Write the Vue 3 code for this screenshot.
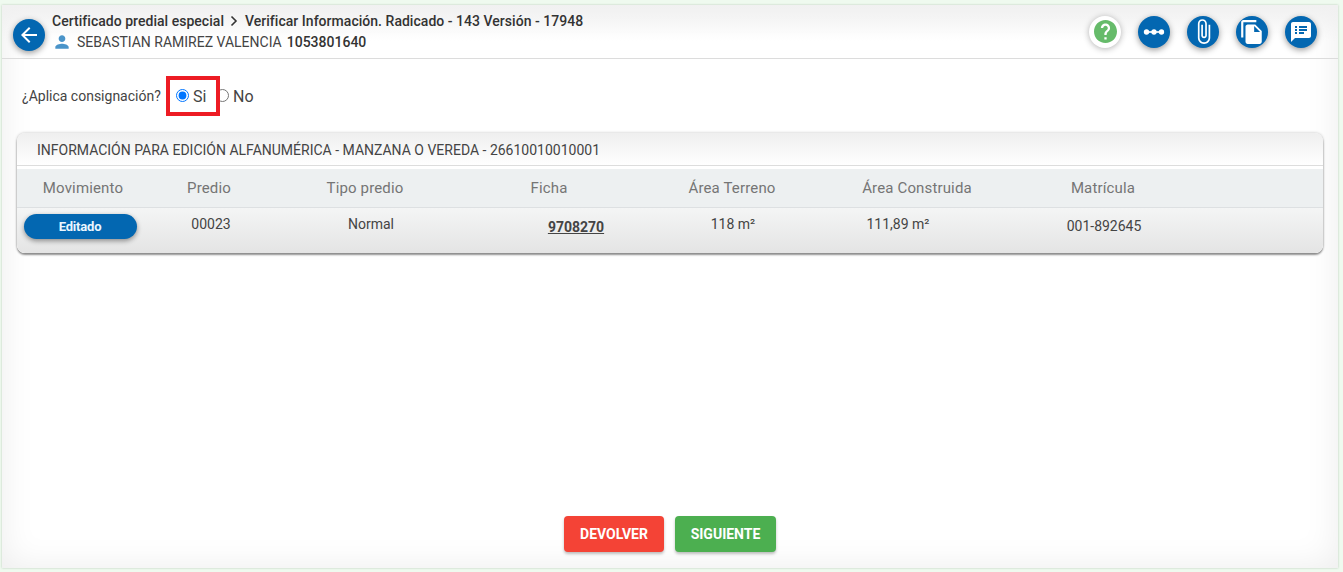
<script setup>
const headers = ['Movimiento', 'Predio', 'Tipo predio', 'Ficha', 'Área Terreno', 'Área Construida', 'Matrícula', '']
</script>

<template>
  <div class="page">
    <main class="panel">
      <header class="top">
        <button class="fab back" aria-label="Volver">
          <svg viewBox="0 0 24 24" width="24" height="24"><path d="M20 11H7.83l5.59-5.59L12 4l-8 8 8 8 1.41-1.41L7.83 13H20v-2z" /></svg>
        </button>
        <div class="titles">
          <div class="crumb">
            <span>Certificado predial especial</span>
            <svg class="chev" viewBox="0 0 10 12" width="10" height="12"><path d="M2.500 1.500 7 6l-4.500 4.500" /></svg>
            <span>Verificar Información. Radicado - 143 Versión - 17948</span>
          </div>
          <div class="person">
            <svg viewBox="0 0 24 24" width="20" height="20"><path d="M12 12c2.210 0 4-1.790 4-4s-1.790-4-4-4-4 1.790-4 4 1.790 4 4 4zm0 2c-2.670 0-8 1.340-8 4v2h16v-2c0-2.660-5.330-4-8-4z" /></svg>
            <span class="name">SEBASTIAN RAMIREZ VALENCIA</span>
            <strong>1053801640</strong>
          </div>
        </div>
        <div class="actions">
          <button class="fab help" aria-label="Ayuda">
            <svg viewBox="2 2 20 20" width="23" height="23"><path d="M12 2C6.480 2 2 6.480 2 12s4.480 10 10 10 10-4.480 10-10S17.520 2 12 2zm1 17h-2v-2h2v2zm2.070-7.750l-.9.920C13.450 12.900 13 13.500 13 15h-2v-.5c0-1.100.45-2.100 1.170-2.830l1.240-1.260c.37-.36.59-.86.59-1.410 0-1.100-.9-2-2-2s-2 .9-2 2H8c0-2.210 1.790-4 4-4s4 1.790 4 4c0 .88-.36 1.680-.93 2.250z" /></svg>
          </button>
          <button class="fab" aria-label="Flujo">
            <svg viewBox="0 0 26 12" width="22" height="10"><path d="M3 5h20v2H3z" /><circle cx="4" cy="6" r="3.200" /><circle cx="13" cy="6" r="3.200" /><circle cx="22" cy="6" r="3.200" /></svg>
          </button>
          <button class="fab" aria-label="Adjuntos">
            <svg viewBox="0 0 24 24" width="27" height="27"><path d="M16.500 6v11.500c0 2.210-1.790 4-4 4s-4-1.790-4-4V5c0-1.380 1.120-2.500 2.500-2.500s2.500 1.120 2.500 2.500v10.500c0 .55-.45 1-1 1s-1-.45-1-1V6H10v9.500c0 1.380 1.120 2.500 2.500 2.500s2.500-1.120 2.500-2.500V5c0-2.210-1.790-4-4-4S7 2.790 7 5v12.500c0 3.040 2.460 5.500 5.500 5.500s5.500-2.460 5.500-5.500V6h-1.500z" /></svg>
          </button>
          <button class="fab" aria-label="Documentos">
            <svg viewBox="0 0 24 24" width="26" height="26"><path d="M16 1H4c-1.100 0-2 .9-2 2v14h2V3h12V1zm-1 4l6 6v10c0 1.100-.9 2-2 2H7.990C6.890 23 6 22.100 6 21l.01-14c0-1.100.89-2 1.990-2h7zm-1 7h5.500L14 6.500V12z" /></svg>
          </button>
          <button class="fab" aria-label="Notas">
            <svg viewBox="0 0 24 24" width="24" height="24"><path d="M20 2H4c-1.100 0-1.990.9-1.990 2L2 22l4-4h14c1.100 0 2-.9 2-2V4c0-1.100-.9-2-2-2zM8 14H6v-2h2v2zm0-3H6V9h2v2zm0-3H6V6h2v2zm7 6h-5v-2h5v2zm3-3h-8V9h8v2zm0-3h-8V6h8v2z" /></svg>
          </button>
        </div>
      </header>

      <section class="question">
        <span class="q-label">¿Aplica consignación?</span>
        <label class="opt si"><input type="radio" name="c" checked />Si</label>
        <label class="opt no"><input type="radio" name="c" />No</label>
        <span class="mark"></span>
      </section>

      <section class="card">
        <h2>INFORMACIÓN PARA EDICIÓN ALFANUMÉRICA - MANZANA O VEREDA - 26610010010001</h2>
        <div class="table">
          <div class="row head">
            <div v-for="h in headers" :key="h" class="cell">{{ h }}</div>
          </div>
          <div class="row body">
            <div class="cell pill-cell"><span class="pill">Editado</span></div>
            <div class="cell up shift-predio">00023</div>
            <div class="cell up shift-normal">Normal</div>
            <div class="cell shift-ficha"><a class="link">9708270</a></div>
            <div class="cell up shift-terreno">118 m²</div>
            <div class="cell up shift-area">111,89 m²</div>
            <div class="cell shift-mat">001-892645</div>
            <div class="cell"></div>
          </div>
        </div>
      </section>

      <footer class="bottom">
        <button class="btn red">DEVOLVER</button>
        <button class="btn green">SIGUIENTE</button>
      </footer>
    </main>
  </div>
</template>

<style>
html, body { margin: 0; overflow: hidden; }
</style>

<style scoped>
* { box-sizing: border-box; }
.page {
  width: 1343px; height: 572px; overflow: hidden;
  padding: 5px 5px 4px 2px;
  background: #effaef;
  font-family: Roboto, "Liberation Sans", sans-serif;
  color: #333;
}
.panel {
  position: relative;
  height: 100%;
  display: flex; flex-direction: column;
  background: #fff;
  box-shadow: inset 0 0 34px rgba(0,0,0,.08), 0 0 2px rgba(60,90,60,.3);
}
.top {
  height: 54px; flex: none;
  display: flex; align-items: center;
  padding: 6px 21px 0 11px;
  border-bottom: 1px solid #dcdcdc;
  background: linear-gradient(#f1f1f1, rgba(255,255,255,0) 36px);
}
.fab {
  width: 32px; height: 32px; flex: none; padding: 0;
  border: 0; border-radius: 50%;
  display: flex; align-items: center; justify-content: center;
  background: #0367b1;
  box-shadow: 0 2px 6px rgba(0,0,0,.4);
}
.fab svg { fill: #fff; }
.help { background: #fff; box-shadow: 0 1px 6px rgba(0,0,0,.3); }
.help svg { fill: #66bb6a; }
.titles { margin-left: 7px; margin-top: -7px; }
.crumb {
  display: flex; align-items: center; gap: 5.500px;
  font-size: 14px; font-weight: 500; line-height: 20px; color: #333;
  letter-spacing: .03px;
}
.chev { fill: none; stroke: #333; stroke-width: 1.600; }
.person {
  display: flex; align-items: center;
  margin-top: 1px; line-height: 20px; font-size: 14px;
}
.person svg { fill: #4a94c9; margin-right: 5px; }
.name { color: #444; font-size: 14px; }
.person strong { margin-left: 5px; font-weight: 500; color: #333; }
.actions { margin-left: auto; display: flex; gap: 17px; margin-top: -6px; }

.question {
  position: relative;
  height: 74px; flex: none;
  display: flex; align-items: center;
  padding-left: 20px;
}
.q-label { font-size: 14px; color: #444; width: 154px; }
.opt {
  display: flex; align-items: center;
  font-size: 16px; color: #444;
}
.opt input { margin: -2px 4px 0 0; width: 13px; height: 13px; accent-color: #0075ff; }
.si { width: 39px; }
.no input { margin-right: 4px; margin-left: 1px; }
.mark {
  position: absolute; left: 164px; top: 17px;
  width: 54px; height: 40px;
  border: 4px solid #ed1c24;
}

.card {
  margin: 0 15px;
  flex: none;
  border-radius: 8px;
  background: linear-gradient(#efefef, #fff 32px);
  box-shadow: 0 2px 2px rgba(0,0,0,.4), 0 0 3px rgba(0,0,0,.25);
  overflow: hidden;
}
.card h2 {
  margin: 0; height: 33px;
  padding: 0 20px;
  font-size: 14px; font-weight: 400; line-height: 34px; color: #444;
  border-bottom: 1px solid #ddd;
}
.table { padding-top: 3px; }
.row {
  display: grid;
  grid-template-columns: 132px 120px 192px 176px 190px 180px 192px 1fr;
}
.head {
  height: 39px; background: #edf0f1; border-bottom: 1px solid #dde0e2;
  font-size: 15px; letter-spacing: .15px; color: #757575;
}
.body { height: 45px; background: linear-gradient(#f4f5f5, #e4e4e4); font-size: 14px; color: #444; }
.cell { display: flex; align-items: center; justify-content: center; }
.head .cell { padding-bottom: 1px; }
.body .cell { height: 37px; }
.up { padding-bottom: 6px; }
.pill-cell { padding-right: 6px; }
.shift-predio { padding-left: 4px; }
.shift-normal { padding-left: 12px; }
.shift-ficha { padding-left: 54px; padding-top: 1px; }
.shift-terreno { padding-left: 2px; }
.shift-area { padding-right: 38px; }
.shift-mat { padding-bottom: 2px; padding-left: 2px; }
.pill {
  width: 113px; height: 25px; margin-top: -1px;
  border-radius: 13px;
  display: flex; align-items: center; justify-content: center;
  background: #0367b1; color: #eaf6ff;
  font-size: 13px; font-weight: 700; letter-spacing: -.2px;
  box-shadow: 0 2px 5px rgba(0,0,0,.4);
}
.link { font-weight: 700; color: #444; text-decoration: underline; font-size: 14px; }

.bottom {
  margin-top: auto; padding-bottom: 16px;
  display: flex; justify-content: center; gap: 11px;
}
.btn {
  height: 36px; padding: 0; border: 0; border-radius: 4px;
  color: #fff; font: 700 14px Roboto, sans-serif;
  box-shadow: 0 2px 3px rgba(0,0,0,.25);
}
.red { width: 100px; background: #f44336; }
.green { width: 101px; background: #4caf50; }
</style>
